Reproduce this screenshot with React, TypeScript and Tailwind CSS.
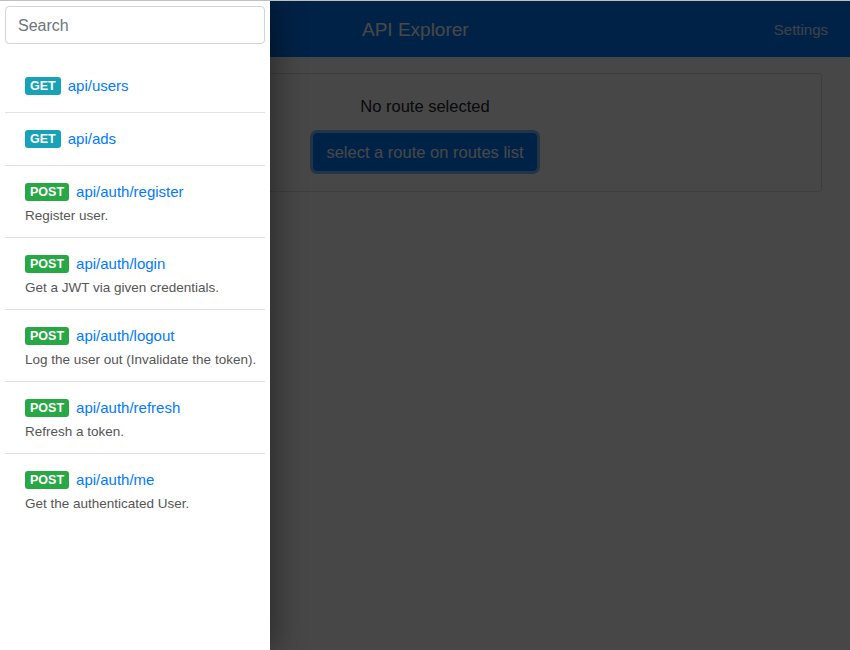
import React from "react";

type Route = { method: "GET" | "POST"; path: string; desc?: string };

const routes: Route[] = [
  { method: "GET", path: "api/users" },
  { method: "GET", path: "api/ads" },
  { method: "POST", path: "api/auth/register", desc: "Register user." },
  { method: "POST", path: "api/auth/login", desc: "Get a JWT via given credentials." },
  { method: "POST", path: "api/auth/logout", desc: "Log the user out (Invalidate the token)." },
  { method: "POST", path: "api/auth/refresh", desc: "Refresh a token." },
  { method: "POST", path: "api/auth/me", desc: "Get the authenticated User." },
];

export default function App() {
  return (
    <div className="relative h-[650px] w-[850px] overflow-hidden border-t border-[#bfbfbf] bg-white font-['Liberation_Sans',Arial,sans-serif]">
      {/* Main page */}
      <div className="flex h-full flex-col">
        <nav className="flex h-[56px] items-center justify-between bg-[#007bff] pl-[362px] pr-[22px]">
          <span className="text-[19px] leading-none text-white">API Explorer</span>
          <span className="text-[15px] font-medium leading-none text-white/85">Settings</span>
        </nav>
        <div className="px-[28px] pt-4">
          <div className="flex flex-col items-center rounded border border-black/[0.125] bg-white px-5 py-5">
            <p className="mb-[15px] text-[16.5px] leading-6 text-[#212529]">No route selected</p>
            <button className="rounded border border-[#007bff] bg-[#007bff] px-3 py-[6px] text-[16.5px] leading-6 text-white ring-[3px] ring-[#007bff]/50">
              select a route on routes list
            </button>
          </div>
        </div>
      </div>

      {/* Dim overlay */}
      <div className="absolute inset-0 bg-black/[0.72]" />

      {/* Sidebar */}
      <aside className="absolute bottom-0 left-0 top-0 w-[270px] bg-white px-[5px] pt-[5px] shadow-[6px_0_28px_rgba(0,0,0,0.4)]">
        <div className="flex h-[38px] items-center rounded border border-[#ced4da] px-3 pt-[1px] text-[16px] text-[#6c757d]">
          Search
        </div>
        <ul className="mt-4">
          {routes.map((r, i) => (
            <li
              key={r.path}
              className={
                (r.desc ? "pb-[13px] " : "pb-4 ") +
                "pl-5 pr-1 pt-4 " +
                (i < routes.length - 1 ? "border-b border-[#dee2e6]" : "")
              }
            >
              <div className="flex h-5 items-center gap-[7px]">
                <span
                  className={
                    (r.method === "GET" ? "bg-[#17a2b8] " : "bg-[#28a745] ") +
                    "rounded-[3px] px-[5px] py-[3px] text-[12.5px] font-bold leading-3 text-white"
                  }
                >
                  {r.method}
                </span>
                <span className="text-[15px] leading-5 text-[#007bff]">{r.path}</span>
              </div>
              {r.desc && (
                <div className="mt-[6px] whitespace-nowrap text-[13.5px] leading-4 text-[#555]">{r.desc}</div>
              )}
            </li>
          ))}
        </ul>
      </aside>
    </div>
  );
}
